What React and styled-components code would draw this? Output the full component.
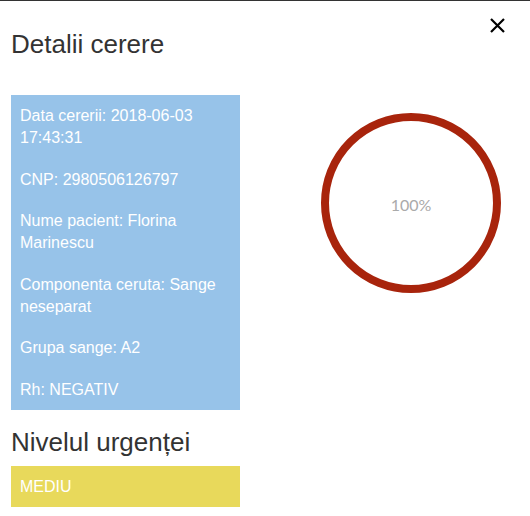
import React from 'react'
import styled, { createGlobalStyle } from 'styled-components'

const Global = createGlobalStyle`
  html, body { margin: 0; padding: 0; background: #fff; }
  body { font-family: "Liberation Sans", Arial, sans-serif; }
`

const Modal = styled.div`
  position: relative;
  width: 530px;
  height: 516px;
  box-sizing: border-box;
  border-top: 1px solid #333;
  padding: 0 11px;
  color: #333;
`

const Close = styled.button`
  position: absolute;
  top: 16px;
  right: 24px;
  width: 17px;
  height: 17px;
  padding: 0;
  border: 0;
  background: none;
  cursor: pointer;
  svg { display: block; }
`

const Title = styled.h2`
  font-size: 26px;
  font-weight: normal;
  line-height: 30px;
  margin: 28px 0 36px;
`

const Row = styled.div`
  display: grid;
  grid-template-columns: 229px 1fr;
`

const InfoBox = styled.div`
  background: #97c3e9;
  color: #fff;
  padding: 10px 9px 9px;
  font-size: 16px;
  line-height: 22px;
  display: flex;
  flex-direction: column;
  gap: 19.5px;
  p { margin: 0; }
`

const Subtitle = styled.h3`
  font-size: 26px;
  font-weight: normal;
  line-height: 30px;
  margin: 17px 0 9px;
`

const Badge = styled.div`
  background: ${p => p.color};
  color: #fff;
  font-size: 16px;
  line-height: 41px;
  padding: 0 9px;
`

const ChartCol = styled.div`
  padding: 18px 0 0 81px;
`

const Ring = styled.div`
  position: relative;
  width: 180px;
  height: 180px;
  svg { display: block; }
`

const Percent = styled.span`
  position: absolute;
  inset: 0;
  display: flex;
  align-items: center;
  justify-content: center;
  font-family: Lato, sans-serif;
  font-size: 16px;
  color: #aaa;
  padding-top: 2px;
`

const info = [
  'Data cererii: 2018-06-03 17:43:31',
  'CNP: 2980506126797',
  'Nume pacient: Florina Marinescu',
  'Componenta ceruta: Sange neseparat',
  'Grupa sange: A2',
  'Rh: NEGATIV',
]

export default function App() {
  return (
    <>
      <Global />
      <Modal>
        <Close aria-label="close">
          <svg width="17" height="17" viewBox="0 0 17 17">
            <path d="M2 2 L15 15 M15 2 L2 15" stroke="#000" strokeWidth="2.2" />
          </svg>
        </Close>
        <Title>Detalii cerere</Title>
        <Row>
          <div>
            <InfoBox>
              {info.map(t => <p key={t}>{t}</p>)}
            </InfoBox>
            <Subtitle>Nivelul urgenței</Subtitle>
            <Badge color="#e8d95b">MEDIU</Badge>
          </div>
          <ChartCol>
            <Ring>
              <svg width="180" height="180" viewBox="0 0 180 180">
                <circle cx="90" cy="90" r="86" fill="none" stroke="#a8240c" strokeWidth="8" />
              </svg>
              <Percent>100%</Percent>
            </Ring>
          </ChartCol>
        </Row>
      </Modal>
    </>
  )
}
